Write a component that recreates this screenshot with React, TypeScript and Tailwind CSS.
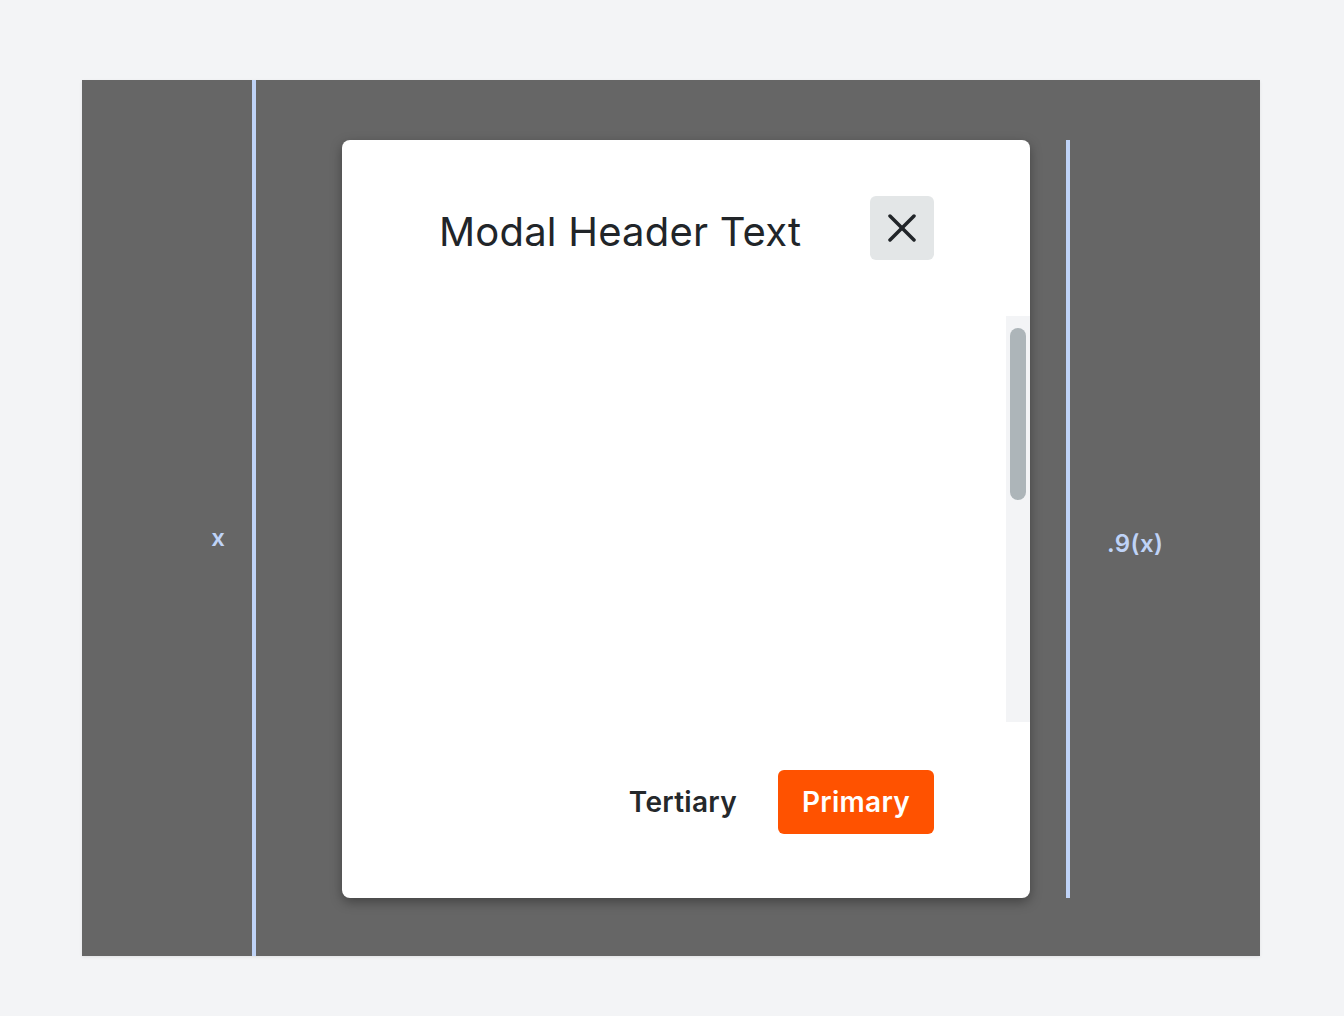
import React from "react";

function CloseIcon() {
  return (
    <svg width="28" height="28" viewBox="0 0 28 28" fill="none" stroke="#212529" strokeWidth="3.5" strokeLinecap="round">
      <path d="M2 2 L26 26" />
      <path d="M26 2 L2 26" />
    </svg>
  );
}

function Modal() {
  return (
    <div className="flex w-[688px] h-[758px] flex-col rounded-lg bg-white shadow-[0_4px_12px_rgba(0,0,0,0.35)]">
      <div className="flex h-[64px] items-center justify-between pl-[97px] pr-[96px] mt-[56px]">
        <h2 className="text-[40px] font-normal leading-none text-[#212529] tracking-[0.2px] mt-2">Modal Header Text</h2>
        <button className="flex h-16 w-16 items-center justify-center rounded-md bg-[#e3e6e7]">
          <CloseIcon />
        </button>
      </div>

      {/* scrollable body */}
      <div className="mt-[56px] flex h-[406px]">
        <div className="flex-1" />
        <div className="w-6 bg-[#f3f4f6] pt-3 pl-1 pr-1">
          <div className="h-[172px] w-4 rounded-full bg-[#adb5b9]" />
        </div>
      </div>

      <div className="mt-[48px] flex items-center justify-end gap-[41px] pr-[96px]">
        <button className="text-[28px] font-semibold text-[#25282b] tracking-[0.3px]">Tertiary</button>
        <button className="flex h-16 w-[156px] items-center justify-center rounded-md bg-[#ff5200] text-[28px] font-semibold text-white tracking-[0.3px]">
          Primary
        </button>
      </div>
    </div>
  );
}

export default function App() {
  return (
    <div className="min-h-screen bg-[#f3f4f6] pt-20 pl-[82px] font-['Inter',sans-serif]">
      <div className="flex h-[876px] w-[1178px] items-stretch bg-[#666666] shadow-[0_1px_3px_rgba(0,0,0,0.08)]">
        <div className="flex w-[170px] items-center justify-end pr-[27px] pt-[40px]">
          <span className="text-2xl font-semibold text-[#bfd3f7]">x</span>
        </div>
        <div className="w-1 bg-[#bfd3f7]" />
        <div className="ml-[86px] mt-[60px]">
          <Modal />
        </div>
        <div className="ml-9 mt-[60px]">
          <div className="h-[758px] w-1 bg-[#bfd3f7]" />
        </div>
        <div className="flex items-center pl-[37px] pt-[52px]">
          <span className="text-2xl font-semibold text-[#bfd3f7] tracking-[0.4px]">.9(x)</span>
        </div>
      </div>
    </div>
  );
}
